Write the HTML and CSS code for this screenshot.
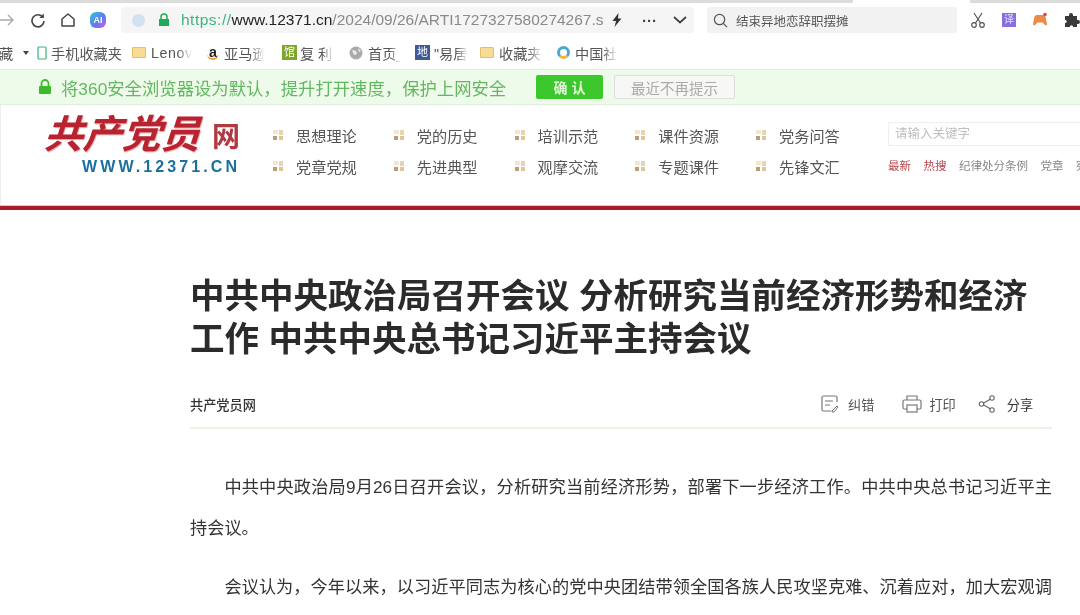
FILE: index.html
```html
<!DOCTYPE html>
<html lang="zh-CN">
<head>
    <meta charset="UTF-8">
    <title>中共中央政治局召开会议</title>
    <link rel="stylesheet" href="styles.css">
</head>
<body>
    <div class="tabstrip"><div class="tab-gap"></div></div>

    <div class="toolbar">
        <svg class="ico back" viewBox="0 0 16 16"><path d="M-2 8h15M8 3l5 5-5 5" fill="none" stroke="#aaa" stroke-width="1.4"/></svg>
        <svg class="ico reload" viewBox="0 0 16 16"><path d="M13 5.500A6 6 0 1 0 14 9" fill="none" stroke="#444" stroke-width="1.6"/><path d="M13.800 1.500v4.600H9.400z" fill="#444"/></svg>
        <svg class="ico home" viewBox="0 0 16 16"><path d="M2 7l6-5 6 5v7H2z" fill="none" stroke="#444" stroke-width="1.5" stroke-linejoin="round"/></svg>
        <div class="ai-badge">AI</div>
        <div class="address">
            <span class="site-dot"></span>
            <svg class="addr-lock" viewBox="0 0 12 14"><path d="M3 6V4a3 3 0 0 1 6 0v2" fill="none" stroke="#22a85a" stroke-width="1.5"/><rect x="1" y="6" width="10" height="7" fill="#22a85a"/></svg>
            <div class="url"><span class="scheme">https://</span><span class="host">www.12371.cn</span>/2024/09/26/ARTI1727327580274267.s</div>
            <svg class="bolt" viewBox="0 0 12 14"><path d="M7.500 0L1.500 8h3.500L3.500 14l7-8.500H7z" fill="#333"/></svg>
            <span class="more">···</span>
            <svg class="chev" viewBox="0 0 14 8"><path d="M1 1l6 5.500L13 1" fill="none" stroke="#444" stroke-width="1.8"/></svg>
        </div>
        <div class="search">
            <svg class="search-ico" viewBox="0 0 16 16"><circle cx="7" cy="7" r="5.500" fill="none" stroke="#555" stroke-width="1.300"/><path d="M11 11l4 4" stroke="#555" stroke-width="1.300"/></svg>
            <span>结束异地恋辞职摆摊</span>
        </div>
        <div class="tools">
            <svg class="ico" viewBox="0 0 16 16"><path d="M4 1l6.500 10M12 1L5.500 11" stroke="#555" stroke-width="1.200" fill="none"/><circle cx="4" cy="13" r="2.300" fill="none" stroke="#555" stroke-width="1.200"/><circle cx="12" cy="13" r="2.300" fill="none" stroke="#555" stroke-width="1.200"/></svg>
            <div class="tr-badge">译</div>
            <svg class="ico" viewBox="0 0 16 16"><path d="M1 12l1.500-7.500Q3 3 5 3h6q2 0 2.500 1.500L15 12q0 2-2 1l-2.500-2.500h-5L3 13q-2 1-2-1z" fill="#ec8a4c"/><circle cx="13" cy="2.500" r="1.800" fill="#e0453a"/></svg>
            <svg class="ico" viewBox="0 0 16 16"><path d="M1 4h4V3a2 2 0 0 1 4 0v1h4v4h1a2 2 0 0 1 0 4h-1v3H9v-1a2 2 0 0 0-3 0v1H1v-4h1a2 2 0 0 0 0-3H1z" fill="#3a3a3a"/></svg>
        </div>
    </div>

    <div class="bookmarks">
        <span class="bm-cut">藏</span>
        <span class="bm-caret"></span>
        <div class="bm bm-phone">
            <svg class="bm-ico-phone" viewBox="0 0 10 14"><rect x="1" y="1" width="8" height="12" rx="1" fill="none" stroke="#3cb371" stroke-width="1.200"/></svg>
            <span>手机收藏夹</span>
        </div>
        <div class="bm bm-lenovo">
            <span class="folder"></span>
            <span class="fade w-lenovo">Lenovo</span>
        </div>
        <div class="bm bm-amazon">
            <span class="amazon">a</span>
            <span class="fade w-amazon">亚马逊网</span>
        </div>
        <div class="bm bm-fuli">
            <span class="guan">馆</span>
            <span class="fade w-fuli">复 利</span>
        </div>
        <div class="bm bm-home">
            <svg class="bm-ico" viewBox="0 0 14 14"><circle cx="7" cy="7" r="6.500" fill="#aaa"/><path d="M3 4l4 1 1 3-3 1zM9 2l3 3-2 1z" fill="#eee"/></svg>
            <span class="fade w-home">首页_</span>
        </div>
        <div class="bm bm-yiju">
            <span class="yi-badge">地</span>
            <span class="fade w-yiju">"易居房</span>
        </div>
        <div class="bm bm-fav">
            <span class="folder"></span>
            <span class="fade w-fav">收藏夹夹</span>
        </div>
        <div class="bm bm-china">
            <span class="ring"></span>
            <span class="fade w-china">中国社会</span>
        </div>
    </div>

    <div class="notice">
        <svg class="notice-lock" viewBox="0 0 14 16"><path d="M3.500 7V4.500a3.500 3.500 0 0 1 7 0V7" fill="none" stroke="#3dbb2c" stroke-width="1.800"/><rect x="1" y="7" width="12" height="8" rx="1" fill="#3dbb2c"/></svg>
        <span class="notice-text">将360安全浏览器设为默认，提升打开速度，保护上网安全</span>
        <button class="btn-ok">确 认</button>
        <button class="btn-later">最近不再提示</button>
    </div>

    <header class="site-head">
        <div class="logo">
            <div class="logo-top">
                <span class="logo-script">共产党员</span>
                <span class="logo-wang">网</span>
            </div>
            <div class="logo-url">WWW.12371.CN</div>
        </div>
        <nav class="nav">
            <a class="nav-item">思想理论</a>
            <a class="nav-item">党的历史</a>
            <a class="nav-item">培训示范</a>
            <a class="nav-item">课件资源</a>
            <a class="nav-item">党务问答</a>
            <a class="nav-item">党章党规</a>
            <a class="nav-item">先进典型</a>
            <a class="nav-item">观摩交流</a>
            <a class="nav-item">专题课件</a>
            <a class="nav-item">先锋文汇</a>
        </nav>
        <div class="site-search">
            <div class="site-input">请输入关键字</div>
            <div class="hot">
                <span class="hot-red">最新</span>
                <span class="hot-red">热搜</span>
                <span>纪律处分条例</span>
                <span>党章</span>
                <span>宪法</span>
            </div>
        </div>
    </header>
    <div class="red-rule"></div>

    <main class="article">
        <h1>中共中央政治局召开会议 分析研究当前经济形势和经济工作 中共中央总书记习近平主持会议</h1>
        <div class="meta">
            <span class="source">共产党员网</span>
            <div class="actions">
                <svg class="act-ico a-edit" viewBox="0 0 18 18"><path d="M16 7V2.500Q16 1 14.500 1h-12Q1 1 1 2.500v12Q1 16 2.500 16H10" fill="none" stroke="#777" stroke-width="1.200"/><path d="M4 6h8M4 10h5" stroke="#777" stroke-width="1.200"/><path d="M11 16l5-5 1 1-4 5h-2z" fill="none" stroke="#777"/></svg>
                <span class="act-label l-edit">纠错</span>
                <svg class="act-ico a-print" viewBox="0 0 20 18"><path d="M5 5V1h10v4M5 14H2.500Q1 14 1 12.500v-6Q1 5 2.500 5h15Q19 5 19 6.500v6q0 1.500-1.500 1.500H15" fill="none" stroke="#777" stroke-width="1.200"/><rect x="5" y="10" width="10" height="7" fill="none" stroke="#777" stroke-width="1.200"/></svg>
                <span class="act-label l-print">打印</span>
                <svg class="act-ico a-share" viewBox="0 0 18 18"><path d="M13.500 3.500L4 9l9.500 5.500" fill="none" stroke="#666" stroke-width="1.100"/><circle cx="14" cy="3" r="2.200" fill="#fff" stroke="#666" stroke-width="1.100"/><circle cx="3.500" cy="9" r="2.200" fill="#fff" stroke="#666" stroke-width="1.100"/><circle cx="14" cy="15" r="2.200" fill="#fff" stroke="#666" stroke-width="1.100"/></svg>
                <span class="act-label l-share">分享</span>
            </div>
        </div>
        <p>中共中央政治局9月26日召开会议，分析研究当前经济形势，部署下一步经济工作。中共中央总书记习近平主持会议。</p>
        <p>会议认为，今年以来，以习近平同志为核心的党中央团结带领全国各族人民攻坚克难、沉着应对，加大宏观调控力度，经济运行总体平稳。</p>
    </main>
</body>
</html>
```

FILE: styles.css
```css
html, body {
    margin: 0;
    height: 615px;
    overflow: hidden;
    background: #fff;
}

body {
    width: 1080px;
    font-family: "Liberation Sans", "Noto Sans CJK SC", sans-serif;
    color: #333;
    filter: blur(0.35px);
}

/* browser chrome */
.tabstrip {
    height: 3px;
    background: #dcdcdc;
    padding-left: 853px;
}

.tab-gap {
    width: 117px;
    height: 3px;
    background: #fff;
}

.toolbar {
    height: 28px;
    display: flex;
    align-items: center;
    margin-top: 3px;
}

.ico {
    width: 16px;
    height: 16px;
    flex: none;
}

.back { margin-left: 0; }
.reload { margin-left: 14px; }
.home { margin-left: 14px; }

.ai-badge {
    width: 16px;
    height: 16px;
    margin-left: 14px;
    border-radius: 6px;
    background: linear-gradient(135deg, #35c3d8, #5a7df0 55%, #d45ae0);
    color: #fff;
    font-size: 9px;
    font-weight: bold;
    line-height: 16px;
    text-align: center;
}

.address {
    width: 573px;
    height: 26px;
    margin-left: 15px;
    background: #f5f5f5;
    border-radius: 4px;
    display: flex;
    align-items: center;
    box-sizing: border-box;
    padding-left: 11px;
}

.site-dot {
    width: 13px;
    height: 13px;
    border-radius: 50%;
    background: #d3e0f2;
    flex: none;
}

.addr-lock {
    width: 12px;
    height: 14px;
    margin-left: 13px;
    flex: none;
}

.url {
    width: 424px;
    margin-left: 11px;
    font-size: 15.500px;
    color: #8a8a8a;
    white-space: nowrap;
    overflow: hidden;
}

.scheme {
    color: #3fb27f;
    letter-spacing: 0.5px;
}

.host { color: #222; }

.bolt {
    width: 12px;
    height: 14px;
    margin-left: 6px;
    flex: none;
}

.more {
    margin-left: 19px;
    font-size: 15px;
    font-weight: bold;
    color: #444;
}

.chev {
    width: 14px;
    height: 8px;
    margin-left: 16px;
    flex: none;
}

.search {
    width: 250px;
    height: 26px;
    margin-left: 13px;
    background: #f2f2f2;
    border-radius: 4px;
    display: flex;
    align-items: center;
    font-size: 12.500px;
    color: #555;
    flex: none;
}

.search-ico {
    width: 15px;
    height: 15px;
    margin: 0 8px 0 6px;
}

.tools {
    display: flex;
    align-items: center;
    gap: 16px;
    margin-left: 13px;
    flex: none;
}

.tr-badge {
    width: 14px;
    height: 14px;
    background: #8a6ee0;
    color: #e8e2fa;
    font-size: 10px;
    line-height: 14px;
    text-align: center;
}

/* bookmarks */
.bookmarks {
    height: 33px;
    padding-top: 2px;
    display: flex;
    align-items: center;
    font-size: 14.200px;
    color: #555;
    white-space: nowrap;
}

.bm-cut {
    width: 14px;
    margin-left: -1px;
}

.bm-caret {
    width: 0;
    height: 0;
    margin-left: 10px;
    border: 3px solid transparent;
    border-top: 4px solid #444;
    border-bottom: 0;
}

.bm {
    display: flex;
    align-items: center;
    flex: none;
}

.bm-phone { margin-left: 8px; }
.bm-lenovo { margin-left: 10px; }
.bm-amazon { margin-left: 15px; }
.bm-fuli { margin-left: 17px; }
.bm-home { margin-left: 15px; }
.bm-yiju { margin-left: 14px; }
.bm-fav { margin-left: 12px; }
.bm-china { margin-left: 14px; }

.bm-ico-phone {
    width: 10px;
    height: 14px;
    margin-right: 4px;
}

.bm-ico {
    width: 14px;
    height: 14px;
    margin-right: 5px;
}

.folder {
    width: 14px;
    height: 11px;
    background: #f6dc95;
    border: 1px solid #e4bf66;
    border-radius: 1px;
    box-sizing: border-box;
    margin-right: 5px;
}

.fade {
    display: block;
    overflow: hidden;
    -webkit-mask-image: linear-gradient(to right, #000 65%, transparent);
    mask-image: linear-gradient(to right, #000 65%, transparent);
}

.w-lenovo {
    width: 41px;
    letter-spacing: 0.6px;
}

.w-amazon { width: 41px; }
.w-fuli { width: 34px; }
.w-home { width: 33px; }
.w-yiju { width: 34px; }
.w-fav { width: 44px; }
.w-china { width: 43px; }

.amazon {
    width: 12px;
    margin-right: 5px;
    font-weight: bold;
    color: #222;
    text-align: center;
    border-bottom: 2px solid #f0a030;
    border-radius: 0 0 6px 6px;
    line-height: 12px;
}

.guan {
    width: 15px;
    height: 15px;
    margin-right: 3px;
    background: #7ea62c;
    color: #fff;
    font-size: 11px;
    line-height: 15px;
    text-align: center;
}

.yi-badge {
    width: 15px;
    height: 15px;
    margin-right: 4px;
    background: #3d5a96;
    color: #fff;
    font-size: 11px;
    line-height: 15px;
    text-align: center;
}

.ring {
    width: 7px;
    height: 7px;
    margin-right: 5px;
    border: 3px solid #4aa8d8;
    border-bottom-color: #e8b93c;
    border-radius: 50%;
}

/* default browser notice */
.notice {
    height: 34px;
    display: flex;
    align-items: center;
    background: #effbea;
    border-top: 1px solid #dfeedd;
    border-bottom: 1px solid #dfeedd;
}

.notice-lock {
    width: 14px;
    height: 16px;
    margin-left: 38px;
    flex: none;
}

.notice-text {
    width: 475px;
    margin-left: 9px;
    font-size: 17.350px;
    color: #62b860;
    white-space: nowrap;
}

.btn-ok {
    width: 67px;
    height: 24px;
    padding: 0;
    background: #3cc82c;
    color: #e2f7dc;
    border: none;
    border-radius: 2px;
    font-family: inherit;
    font-size: 14px;
    font-weight: bold;
}

.btn-later {
    width: 121px;
    height: 24px;
    margin-left: 11px;
    padding: 0;
    background: #f7f7f5;
    color: #aaa;
    border: 1px solid #ddd;
    border-radius: 2px;
    font-family: inherit;
    font-size: 14.500px;
}

/* site header */
.site-head {
    height: 100px;
    display: flex;
    box-sizing: border-box;
    border-left: 1px solid #eee;
}

.logo {
    width: 248px;
    flex: none;
    padding: 9px 0 0 40px;
    box-sizing: border-box;
}

.logo-top {
    display: flex;
    align-items: flex-end;
    height: 41px;
}

.logo-script {
    width: 171px;
    font-size: 39px;
    line-height: 41px;
    font-weight: bold;
    color: #b8232f;
    white-space: nowrap;
    transform: skewX(-18deg);
    transform-origin: left bottom;
    text-shadow: 1px 1px 1px #e29aa0;
}

.logo-wang {
    width: 28px;
    height: 28px;
    font-size: 28px;
    line-height: 28px;
    font-weight: bold;
    color: #b13a42;
    text-align: center;
    margin-bottom: 3px;
}

.logo-url {
    margin: 3px 0 0 41px;
    font-size: 16px;
    line-height: 18px;
    font-weight: bold;
    letter-spacing: 3.100px;
    color: #1c6f9e;
    white-space: nowrap;
}

.nav {
    width: 615px;
    height: 62px;
    margin: 14px 0 0 24px;
    flex: none;
    display: grid;
    grid-template-columns: repeat(5, 120.750px);
    grid-auto-rows: 31px;
    align-items: center;
}

.nav-item {
    display: flex;
    align-items: center;
    font-size: 15.200px;
    color: #555;
    white-space: nowrap;
}

.nav-item::before {
    content: "";
    width: 10px;
    height: 10px;
    margin-right: 13px;
    background:
        linear-gradient(#b99f72, #b99f72) 0 100% / 4px 4px no-repeat,
        linear-gradient(#e8d4b0, #e8d4b0) 100% 0 / 4px 5px no-repeat,
        linear-gradient(#f2e6d0, #f2e6d0) 0 0 / 5px 4px no-repeat,
        linear-gradient(#dcc69c, #dcc69c) 100% 100% / 4px 4px no-repeat;
}

.site-search {
    width: 230px;
    flex: none;
    margin-top: 17px;
}

.site-input {
    height: 24px;
    box-sizing: border-box;
    border: 1px solid #eee;
    padding-left: 6px;
    font-size: 12.500px;
    line-height: 22px;
    color: #c0c0c0;
}

.hot {
    display: flex;
    gap: 12.500px;
    margin-top: 12px;
    font-size: 11.500px;
    line-height: 16px;
    color: #888;
    white-space: nowrap;
}

.hot-red { color: #b5434c; }

.red-rule {
    height: 5px;
    background: #a81c2e;
    border-top: 1px solid #e8c4c8;
    box-sizing: border-box;
}

/* article */
.article {
    width: 862px;
    margin-left: 190px;
}

h1 {
    margin: 65px 0 0;
    font-size: 34.500px;
    line-height: 43px;
    font-weight: bold;
    color: #2b2b2b;
}

.meta {
    display: flex;
    align-items: center;
    height: 38px;
    margin-top: 24px;
    padding-bottom: 4px;
    border-bottom: 2px solid #f0f0e6;
}

.source {
    width: 631px;
    font-size: 13.200px;
    font-weight: 500;
    color: #333;
}

.actions {
    display: flex;
    align-items: center;
}

.act-ico {
    width: 18px;
    height: 18px;
    flex: none;
}

.a-edit { margin-left: 0; }

.a-print {
    width: 20px;
    margin-left: 28px;
}

.a-share { margin-left: 22px; }

.act-label {
    font-size: 13.200px;
    color: #555;
    white-space: nowrap;
}

.l-edit { margin-left: 9px; }
.l-print { margin-left: 7px; }

.l-share {
    margin-left: 11px;
    color: #333;
}

.article p {
    margin: 0 0 18px;
    font-size: 17.200px;
    line-height: 41px;
    text-indent: 2em;
    color: #333;
    text-align: justify;
}

.meta + p { margin-top: 38px; }
```
